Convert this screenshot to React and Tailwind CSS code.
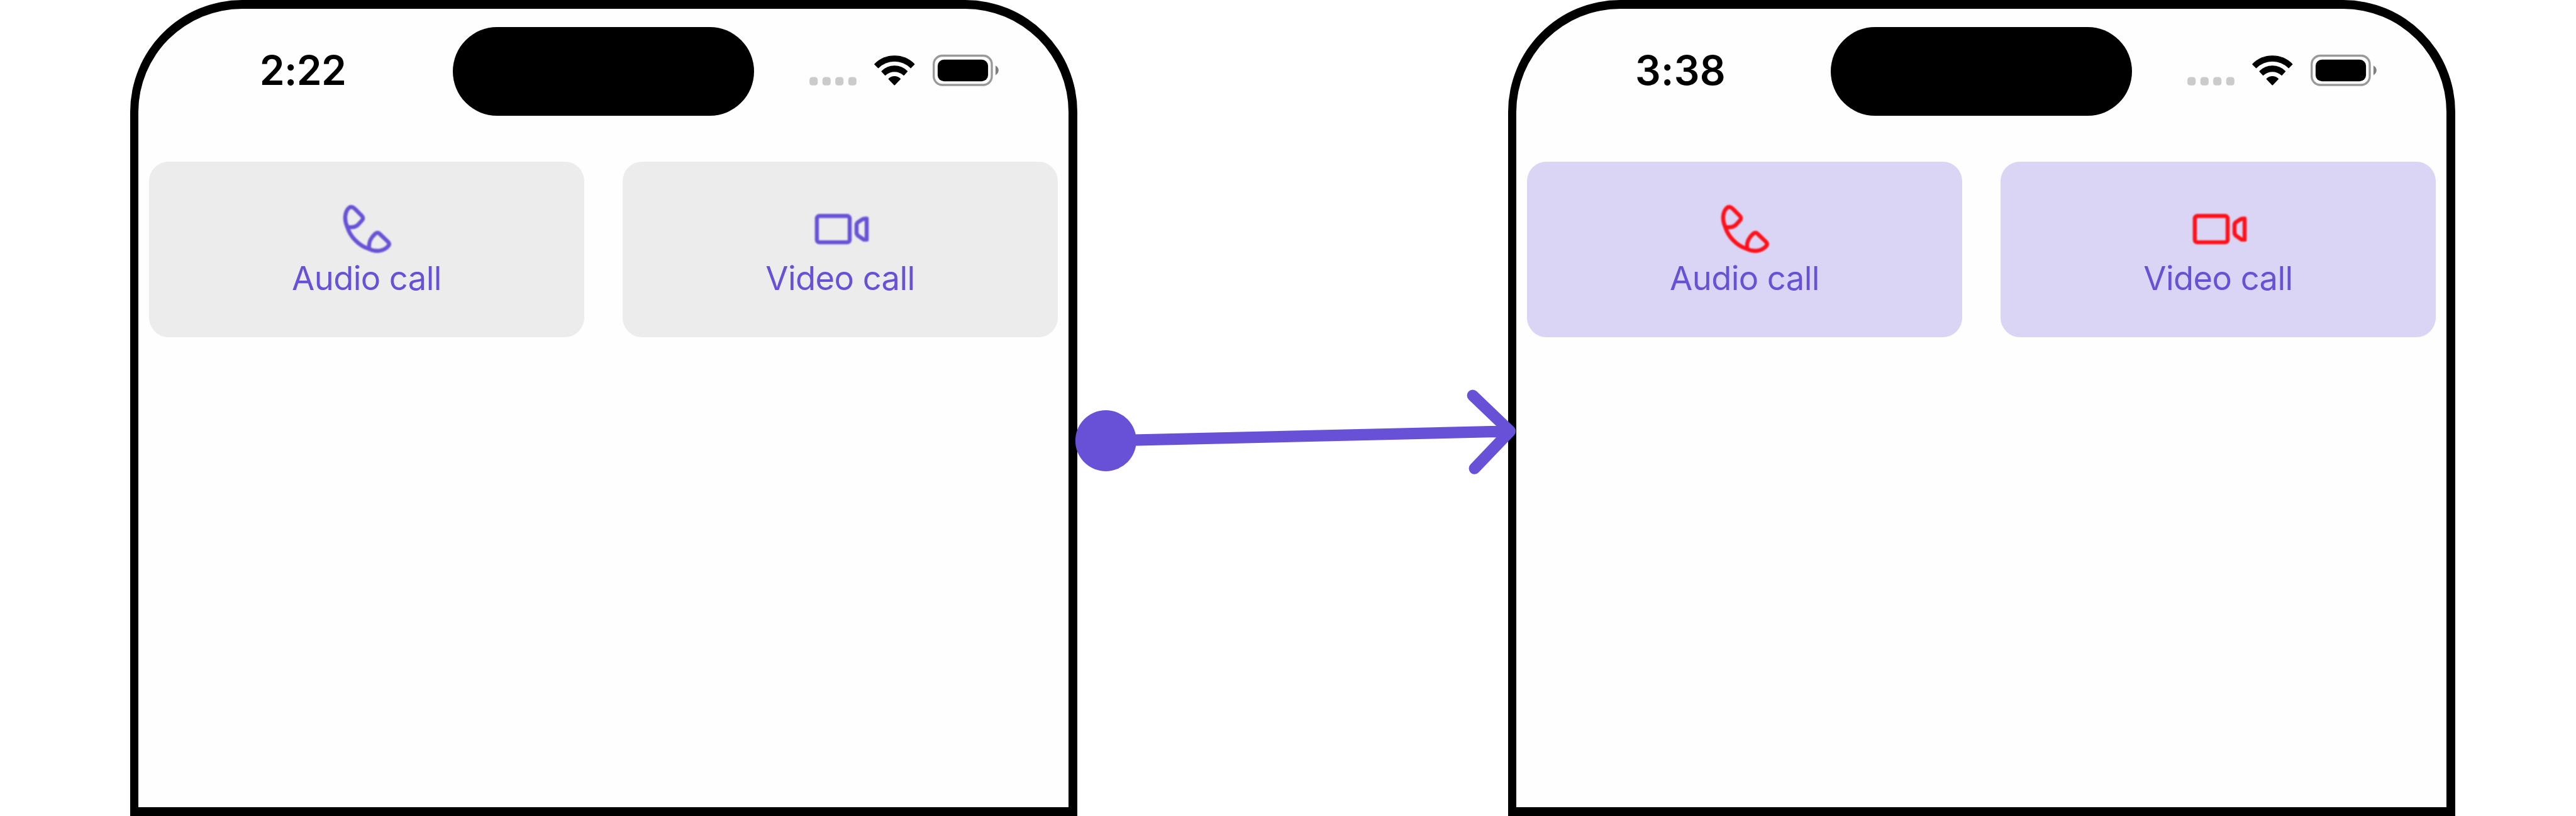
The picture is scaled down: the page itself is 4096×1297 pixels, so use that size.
const PhoneIcon = () => (
  <svg viewBox="332 90 300 300" className="h-[91px] w-[91px] overflow-visible blur-[1.2px]" fill="none" stroke="currentColor" strokeWidth="21" strokeLinecap="round" strokeLinejoin="round">
    <path d="M379 227C361 190 366 148 387 128C397 119 410 123 420 134L454 168C463 178 463 185 456 193L436 215C424 229 402 231 379 227Z" />
    <path d="M379 227C392 275 438 327 494 343" />
    <path d="M494 343C489 307 501 285 524 264C534 255 543 257 551 266L592 305C600 313 600 322 591 331C568 355 526 360 494 343Z" />
  </svg>
);

const VideoIcon = () => (
  <svg viewBox="354 90 300 300" className="h-[91px] w-[91px] overflow-visible blur-[1.2px]" fill="none" stroke="currentColor" strokeWidth="21" strokeLinejoin="round">
    <rect x="380" y="170" width="172" height="138" rx="13" />
    <path d="M641 184V294H626L597 274Q588 266 588 258V218Q588 208 597 202L620 187Q626 184 641 184Z" />
  </svg>
);

const StatusIcons = () => (
  <svg viewBox="0 0 1080 270" className="mt-[59px] ml-[76px] h-[82px] w-[328px] shrink-0">
    <g fill="#cbcbcb">
      <rect x="40" y="163" width="43" height="44" rx="14" />
      <rect x="108" y="163" width="43" height="44" rx="14" />
      <rect x="175" y="163" width="43" height="44" rx="14" />
      <rect x="243" y="163" width="43" height="44" rx="14" />
    </g>
    <g fill="#000" stroke="#000" strokeWidth="4" strokeLinejoin="round">
      <path d="M381 96A146 146 0 0 1 589 96L570 115A120 120 0 0 0 400 115Z" />
      <path d="M418 133A94 94 0 0 1 552 133L534 153A73 73 0 0 0 436 153Z" />
      <path d="M455 173A42 42 0 0 1 515 173L485 204Z" />
    </g>
    <rect x="690.5" y="51" width="304" height="153" rx="45" fill="none" stroke="#999" strokeWidth="11" />
    <rect x="711" y="72" width="264" height="113" rx="33" fill="#000" />
    <path d="M1014 103Q1030 112 1030 128Q1030 144 1014 153Z" fill="#808080" />
  </svg>
);

const CallButton = ({ icon, label, tone }) => (
  <button className={`flex h-[279px] w-[692px] flex-col items-center rounded-[31px] pt-[62px] ${tone.card}`}>
    <span className={tone.icon}>{icon}</span>
    <span className="text-[52.5px] leading-[64px] tracking-[-0.6px] whitespace-nowrap text-[#6851d6]">{label}</span>
  </button>
);

const Phone = ({ time, timeClass, tone }) => (
  <section className="h-[1297px] w-[1506px] shrink-0 rounded-t-[178px] border-[14px] border-l-[13px] border-black bg-[#fefefe]">
    <header className="flex h-[243px] items-start">
      <div className={`w-[500px] shrink-0 pt-[59px] text-center text-[64px] leading-[78px] font-semibold text-black ${timeClass}`}>{time}</div>
      <div className="mt-[29px] h-[141px] w-[479px] shrink-0 rounded-full bg-black" />
      <StatusIcons />
    </header>
    <div className="flex gap-[61px] pl-[17px]">
      <CallButton icon={<PhoneIcon />} label="Audio call" tone={tone} />
      <CallButton icon={<VideoIcon />} label="Video call" tone={tone} />
    </div>
  </section>
);

const before = { card: "bg-[#ececec]", icon: "text-[#6851d6]" };
const after = { card: "bg-[#dad5f5]", icon: "text-[#ff1018]" };

export default function App() {
  return (
    <main className="relative flex h-[1297px] w-[4096px] gap-[685px] overflow-hidden bg-white pl-[207px] font-['Inter',sans-serif]">
      <Phone time="2:22" timeClass="pl-[23px] tracking-[-0.6px]" tone={before} />
      <Phone time="3:38" timeClass="pl-[22px] tracking-[0.3px]" tone={after} />
      <svg viewBox="1870 670 790 170" className="absolute top-[610px] left-[1703px] h-[155px] w-[719px]" fill="none" stroke="#6851d6" strokeWidth="20" strokeLinecap="round" strokeLinejoin="round">
        <circle cx="1930.8" cy="769.3" r="53.3" fill="#6851d6" stroke="none" />
        <path d="M1930.8 769.3L2637 752.7M2571.8 690.3L2637 752.7L2575 817.7" />
      </svg>
    </main>
  );
}
